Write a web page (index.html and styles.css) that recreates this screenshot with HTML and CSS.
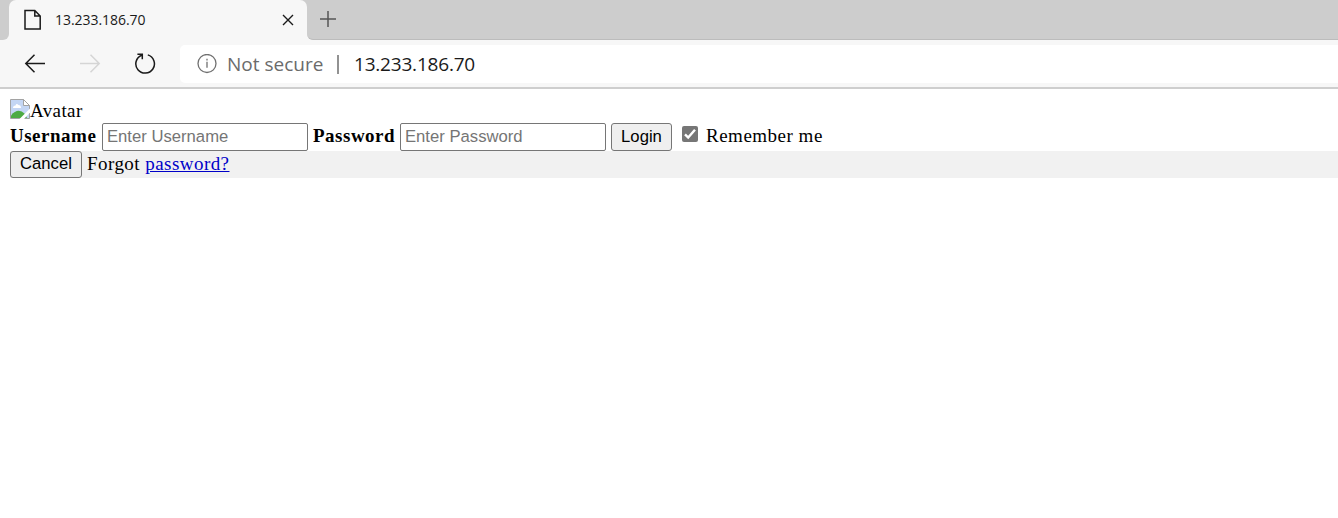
FILE: index.html
```html
<!DOCTYPE html>
<html lang="en">
<head>
<meta charset="utf-8">
<title>13.233.186.70</title>
<link rel="stylesheet" href="styles.css">
</head>
<body>
<header class="browser">
  <div class="tabs">
    <div class="tab-before"></div>
    <div class="tab">
      <svg class="file" width="18" height="22" viewBox="0 0 18 22" fill="none" stroke="#1a1a1a" stroke-width="1.5"><path d="M1 1.5H10.8L16.2 7V20H1ZM10.8 1.5V7H16.2"/></svg>
      <span class="tab-title">13.233.186.70</span>
      <svg class="close" width="12" height="12" viewBox="0 0 12 12" stroke="#1a1a1a" stroke-width="1.4"><path d="M1 1L11 11M11 1L1 11"/></svg>
    </div>
    <div class="tab-after">
      <svg width="18" height="18" viewBox="0 0 18 18" stroke="#555" stroke-width="1.5"><path d="M1 9H17M9 1V17"/></svg>
    </div>
  </div>
  <div class="toolbar">
    <svg class="back" width="22" height="20" viewBox="0 0 22 20" fill="none" stroke="#1a1a1a" stroke-width="1.5"><path d="M21 9.5H1.8M10.5 .8L1.8 9.5L10.5 18.2"/></svg>
    <svg class="forward" width="22" height="20" viewBox="0 0 22 20" fill="none" stroke="#d5d5d5" stroke-width="1.5"><path d="M1 9.5H20.2M11.5 .8L20.2 9.5L11.5 18.2"/></svg>
    <svg class="reload" width="22" height="22" viewBox="0 0 22 22" fill="none" stroke="#1a1a1a" stroke-width="1.5"><path d="M13.8 1.9A9.3 9.3 0 1 1 7.6 2.2M3.4 1.3H8.3V6.3"/></svg>
    <div class="address">
      <svg class="info" width="20" height="20" viewBox="0 0 20 20" fill="none" stroke="#707070" stroke-width="1.3"><circle cx="10" cy="9.5" r="9"/><path d="M10 7.8V13.8M10 4.8V6.4"/></svg>
      <span class="security">Not secure</span>
      <span class="divider"></span>
      <span class="url">13.233.186.70</span>
    </div>
  </div>
</header>
<main class="page">
  <div class="avatar">
    <svg width="20" height="20" viewBox="0 0 20 20"><path d="M.5.5H13.5L19.5 6.5V19.5H.5Z" fill="#c4d6f4" stroke="#a3a3a3"/><path d="M3 9Q3 6.5 5.5 6.5Q6.5 4 8.5 6Q11 6 11 9Z" fill="#fff"/><path d="M1 19V16.5Q8 8 15 15L17 19Z" fill="#4dab43"/><path d="M13.5.5V6.5H19.5Z" fill="#fff" stroke="#a3a3a3"/><path d="M9.5 20L20 9.5V13.5L14 20Z" fill="#fff"/></svg><span class="alt">Avatar</span>
  </div>
  <form class="fields">
    <label class="name" for="user"><b>Username</b></label>
    <input class="field" id="user" type="text" placeholder="Enter Username">
    <label class="name" for="pass"><b>Password</b></label>
    <input class="field" id="pass" type="password" placeholder="Enter Password">
    <button class="button login" type="button">Login</button>
    <span class="check"><svg width="16" height="16" viewBox="0 0 16 16"><rect width="16" height="16" rx="2" fill="#767676"/><path d="M3 8.4L6.2 11.6L13 3.8" fill="none" stroke="#fff" stroke-width="2.4"/></svg></span>
    <span class="remember">Remember me</span>
  </form>
  <div class="footer">
    <button class="button cancel" type="button">Cancel</button>
    <span class="forgot">Forgot <a href="#">password?</a></span>
  </div>
</main>
</body>
</html>
```
FILE: styles.css
```css
* { box-sizing: border-box; }
body { margin: 0; height: 518px; overflow: hidden; background: #fff; color: #000; }
svg { display: block; flex: none; }
.browser { height: 89px; background: #f7f7f7; border-bottom: 2px solid #cecece; font-family: "Open Sans", "Noto Sans", sans-serif; }
.tabs { display: flex; height: 40px; }
.tab-before { width: 9px; background: #cdcdcd; border-radius: 0 0 6px 0; }
.tab { display: flex; align-items: center; width: 298px; padding-left: 15px; background: linear-gradient(90deg, #cdcdcd 8px, #f7f7f7 8px, #f7f7f7 290px, #cdcdcd 290px) top / 100% 8px no-repeat; position: relative; }
.tab::before { content: ""; position: absolute; inset: 0; background: #f7f7f7; border-radius: 7px 7px 0 0; }
.tab > * { position: relative; }
.tab-title { width: 92px; margin-left: 13px; font-size: 14px; line-height: 20px; letter-spacing: -0.05px; color: #1a1a1a; white-space: nowrap; }
.close { margin-left: 135px; }
.tab-after { flex: 1; padding: 10px 0 0 12px; background: #cdcdcd; border-bottom: 1px solid #bcbcbc; border-radius: 0 0 0 6px; }
.toolbar { display: flex; align-items: center; height: 47px; padding-left: 24px; }
.forward { margin-left: 33px; }
.reload { margin-left: 33px; }
.address { display: flex; align-items: center; flex: 1; height: 38px; margin: 1px 0 0 24px; padding-left: 17px; background: #fff; border-radius: 5px 0 0 5px; font-size: 19px; line-height: 26px; white-space: nowrap; }
.security { width: 98px; margin-left: 10px; color: #6b6b6b; }
.divider { width: 2px; height: 19px; margin-left: 12px; background: #929292; }
.url { margin-left: 15px; letter-spacing: -0.2px; color: #1a1a1a; }
.page { padding: 10px 0 0 10px; font: 19px/24px "Liberation Serif", serif; letter-spacing: 0.5px; }
.avatar { display: flex; height: 24px; }
.alt { letter-spacing: 0.4px; }
.fields { display: flex; height: 28px; margin: 0; white-space: nowrap; }
.name { width: 87px; margin: 1px 5px 0 0; }
.name[for="pass"] { width: 82px; }
.field { width: 206px; height: 28px; margin: 0 5px 0 0; padding: 1px 4px; border: 1px solid #767676; border-radius: 2px; font: 16.67px "Liberation Sans", sans-serif; }
.field::placeholder { color: #757575; opacity: 1; }
.button { border: 1px solid #767676; border-radius: 3px; background: #efefef; padding: 0; color: #000; font: 16.67px/20px "Liberation Sans", sans-serif; }
.login { width: 61px; height: 28px; }
.check { margin: 3px 0 0 10px; }
.remember { margin: 1px 0 0 8px; }
.footer { display: flex; height: 27px; background: #f1f1f1; }
.cancel { width: 72px; height: 27px; padding-bottom: 2px; }
.forgot { margin: 1px 0 0 5px; letter-spacing: 0.45px; }
.forgot a { color: #0000c8; text-decoration: underline; }
```
